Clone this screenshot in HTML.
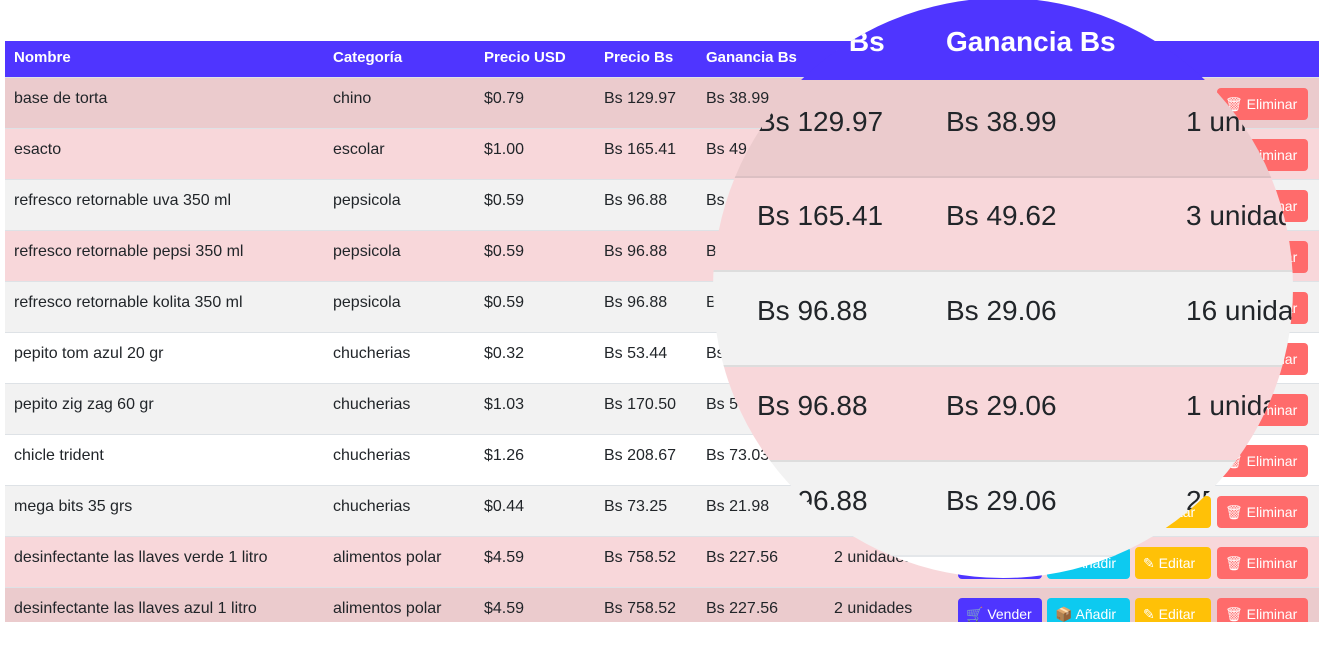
<!DOCTYPE html>
<html><head><meta charset="utf-8"><style>
*{margin:0;padding:0;box-sizing:border-box}
body{width:1319px;height:664px;background:#fff;position:relative;overflow:hidden;font-family:"Liberation Sans","DejaVu Sans",sans-serif;color:#212529}
.t{position:absolute;left:5px;top:41px;width:1314px;height:581px;overflow:hidden}
.h{position:absolute;left:0;top:0;width:1314px;height:36px;background:#4f35ff;color:#fff;font-weight:bold;font-size:15px}
.h span,.r span{position:absolute;top:8px;white-space:nowrap}
.r{position:absolute;left:0;width:1314px;height:51px;font-size:16px;border-top:1px solid #dee2e6}
.r span{top:12px}
.b{position:absolute;top:10px;height:32px;border-radius:4px;color:#fff;font-size:14px;line-height:32px;padding-left:8px}
.v{left:953px;width:84px;background:#4f35ff}
.a{left:1042px;width:83px;background:#0dcaf0}
.e{left:1130px;width:76px;background:#ffc107}
.x{left:1212px;width:91px;background:#ff6b6b}
.c{position:absolute;left:0;top:0;width:1319px;height:664px;clip-path:circle(290px at 1003px 288px)}
.c div{position:absolute;left:0;width:1319px}
.c span{position:absolute;white-space:nowrap;font-size:28px}
</style></head><body>
<div class="t">
<div class="h"><span style="left:9px">Nombre</span><span style="left:328px">Categoría</span><span style="left:479px">Precio USD</span><span style="left:599px">Precio Bs</span><span style="left:701px">Ganancia Bs</span></div>

<div class="r" style="top:36px;background:#ebcbcd"><span style="left:9px">base de torta</span><span style="left:328px">chino</span><span style="left:479px">$0.79</span><span style="left:599px">Bs 129.97</span><span style="left:701px">Bs 38.99</span><span style="left:829px">1 unidades</span><div class="b v">🛒 Vender</div><div class="b a">📦 Añadir</div><div class="b e">✎ Editar</div><div class="b x">🗑 Eliminar</div></div>
<div class="r" style="top:87px;background:#f8d7da"><span style="left:9px">esacto</span><span style="left:328px">escolar</span><span style="left:479px">$1.00</span><span style="left:599px">Bs 165.41</span><span style="left:701px">Bs 49.62</span><div class="b x">🗑 Eliminar</div></div>
<div class="r" style="top:138px;background:#f2f2f2"><span style="left:9px">refresco retornable uva 350 ml</span><span style="left:328px">pepsicola</span><span style="left:479px">$0.59</span><span style="left:599px">Bs 96.88</span><span style="left:701px">Bs 29.06</span><div class="b x">🗑 Eliminar</div></div>
<div class="r" style="top:189px;background:#f8d7da"><span style="left:9px">refresco retornable pepsi 350 ml</span><span style="left:328px">pepsicola</span><span style="left:479px">$0.59</span><span style="left:599px">Bs 96.88</span><span style="left:701px">Bs 29.06</span><div class="b x">🗑 Eliminar</div></div>
<div class="r" style="top:240px;background:#f2f2f2"><span style="left:9px">refresco retornable kolita 350 ml</span><span style="left:328px">pepsicola</span><span style="left:479px">$0.59</span><span style="left:599px">Bs 96.88</span><span style="left:701px">Bs 29.06</span><div class="b x">🗑 Eliminar</div></div>
<div class="r" style="top:291px;background:#fff"><span style="left:9px">pepito tom azul 20 gr</span><span style="left:328px">chucherias</span><span style="left:479px">$0.32</span><span style="left:599px">Bs 53.44</span><span style="left:701px">Bs 16.03</span><div class="b x">🗑 Eliminar</div></div>
<div class="r" style="top:342px;background:#f2f2f2"><span style="left:9px">pepito zig zag 60 gr</span><span style="left:328px">chucherias</span><span style="left:479px">$1.03</span><span style="left:599px">Bs 170.50</span><span style="left:701px">Bs 59.</span><div class="b x">🗑 Eliminar</div></div>
<div class="r" style="top:393px;background:#fff"><span style="left:9px">chicle trident</span><span style="left:328px">chucherias</span><span style="left:479px">$1.26</span><span style="left:599px">Bs 208.67</span><span style="left:701px">Bs 73.03</span><div class="b x">🗑 Eliminar</div></div>
<div class="r" style="top:444px;background:#f2f2f2"><span style="left:9px">mega bits 35 grs</span><span style="left:328px">chucherias</span><span style="left:479px">$0.44</span><span style="left:599px">Bs 73.25</span><span style="left:701px">Bs 21.98</span><div class="b e">✎ Editar</div><div class="b x">🗑 Eliminar</div></div>
<div class="r" style="top:495px;background:#f8d7da"><span style="left:9px">desinfectante las llaves verde 1 litro</span><span style="left:328px">alimentos polar</span><span style="left:479px">$4.59</span><span style="left:599px">Bs 758.52</span><span style="left:701px">Bs 227.56</span><span style="left:829px">2 unidades</span><div class="b v">🛒 Vender</div><div class="b a">📦 Añadir</div><div class="b e">✎ Editar</div><div class="b x">🗑 Eliminar</div></div>
<div class="r" style="top:546px;background:#ebcbcd"><span style="left:9px">desinfectante las llaves azul 1 litro</span><span style="left:328px">alimentos polar</span><span style="left:479px">$4.59</span><span style="left:599px">Bs 758.52</span><span style="left:701px">Bs 227.56</span><span style="left:829px">2 unidades</span><div class="b v">🛒 Vender</div><div class="b a">📦 Añadir</div><div class="b e">✎ Editar</div><div class="b x">🗑 Eliminar</div></div>
</div>

<div class="c">
<div style="top:0;height:80px;background:#4f35ff"><span style="left:946px;top:26px;color:#fff;font-weight:bold">Ganancia Bs</span><span style="left:824px;top:26px;color:#fff;font-weight:bold">o Bs</span></div>
<div style="top:80px;height:96px;background:#ebcbcd"><span style="left:757px;top:26px">Bs 129.97</span><span style="left:946px;top:26px">Bs 38.99</span><span style="left:1186px;top:26px">1 unidades</span></div>
<div style="top:176px;height:94px;background:#f8d7da;border-top:2px solid #dcc0c3"><span style="left:757px;top:22px">Bs 165.41</span><span style="left:946px;top:22px">Bs 49.62</span><span style="left:1186px;top:22px">3 unidades</span></div>
<div style="top:270px;height:95px;background:#f2f2f2;border-top:2px solid #ddd"><span style="left:757px;top:23px">Bs 96.88</span><span style="left:946px;top:23px">Bs 29.06</span><span style="left:1186px;top:23px">16 unidades</span></div>
<div style="top:365px;height:95px;background:#f8d7da;border-top:2px solid #ddd"><span style="left:757px;top:23px">Bs 96.88</span><span style="left:946px;top:23px">Bs 29.06</span><span style="left:1186px;top:23px">1 unidades</span></div>
<div style="top:460px;height:95px;background:#f2f2f2;border-top:2px solid #ddd"><span style="left:757px;top:23px">Bs 96.88</span><span style="left:946px;top:23px">Bs 29.06</span><span style="left:1186px;top:23px">25 unidades</span></div>
<div style="top:555px;height:40px;background:#fff;border-top:2px solid #e4e7ea"></div>
</div>
</body></html>
